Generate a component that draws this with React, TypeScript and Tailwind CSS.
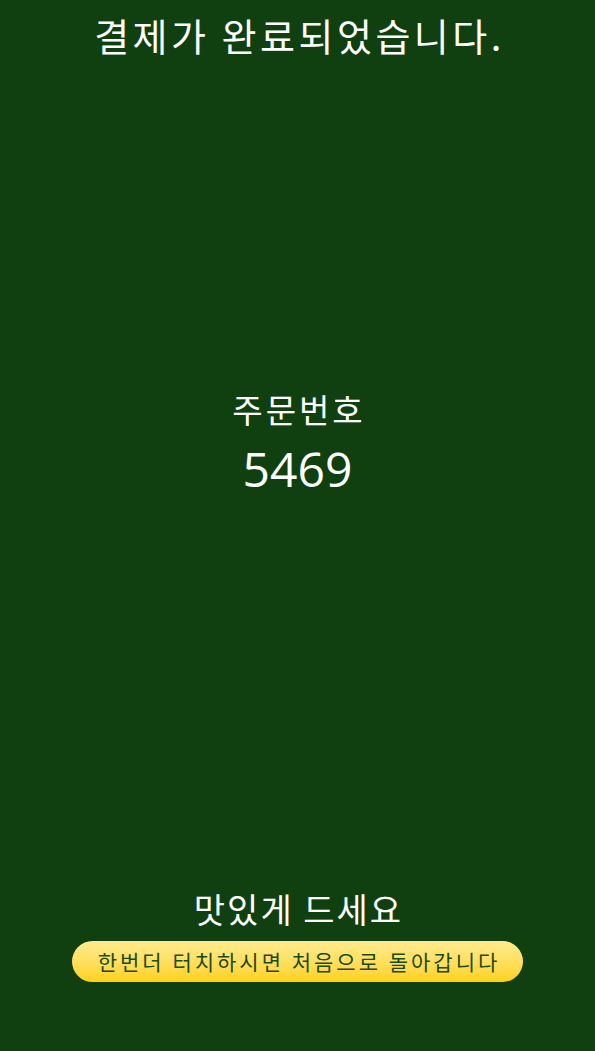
export default function App() {
  return (
    <div
      className="w-[595px] h-[1051px] bg-[#10400f] text-white flex flex-col items-center overflow-hidden"
      style={{ fontFamily: '"Noto Sans CJK KR", "Noto Sans", sans-serif' }}
    >
      <h1 className="mt-[7px] text-[38px] leading-[56px] tracking-[3.5px] pl-[4px]">결제가 완료되었습니다.</h1>
      <div className="flex flex-col items-center mt-[324px]">
        <div className="text-[33px] leading-[44px] tracking-[3px] pl-[3px]">주문번호</div>
        <div className="text-[48px] leading-[58px] mt-[9px]" style={{ fontFamily: '"Segoe UI", "Open Sans", sans-serif' }}>5469</div>
      </div>
      <div className="flex-1" />
      <div className="text-[34px] leading-[48px] mb-[8px] tracking-[2px] pl-[2px]">맛있게 드세요</div>
      <button className="w-[451px] h-[41px] rounded-full bg-gradient-to-b from-[#ffec8c] to-[#ffd200] text-[#1b4a14] text-[21px] leading-[41px] tracking-[3px] pl-[3px] mb-[69px]">
        한번더 터치하시면 처음으로 돌아갑니다
      </button>
    </div>
  );
}
